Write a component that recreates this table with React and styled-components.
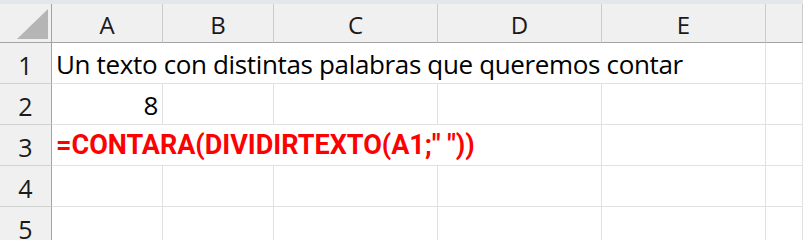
import React from 'react';
import styled, { createGlobalStyle } from 'styled-components';

const Global = createGlobalStyle`
  html, body { margin: 0; background: #fff; overflow: hidden; }
  body { font-family: "Open Sans", "Noto Sans", sans-serif; }
`;

const TopStrip = styled.div`
  height: 4px;
  background: #e3e7ec;
`;

const Grid = styled.div`
  display: grid;
  grid-template-columns: 52px 111px 111px 164px 164px 164px 1fr;
  grid-template-rows: 39px repeat(5, 41px);
`;

const Corner = styled.div`
  background: #f0f0f0;
  border-right: 1px solid #a3a3a3;
  border-bottom: 1px solid #a3a3a3;
  display: flex;
  align-items: flex-end;
  justify-content: flex-end;
  padding: 0 3px 3px 0;
`;

const Triangle = styled.div`
  width: 31px;
  height: 30px;
  background: #b5b5b5;
  clip-path: polygon(100% 0, 100% 100%, 0 100%);
`;

const ColHead = styled.div`
  background: #f0f0f0;
  border-right: 1px solid #cbcbcb;
  border-bottom: 1px solid #a3a3a3;
  display: flex;
  align-items: flex-end;
  justify-content: center;
  padding-bottom: 5px;
  font-size: 24px;
  line-height: 1;
  color: #1a1a1a;
`;

const RowHead = styled.div`
  background: #f0f0f0;
  border-right: 1px solid #a3a3a3;
  border-bottom: 1px solid #d2d2d2;
  display: flex;
  align-items: flex-end;
  justify-content: center;
  padding-bottom: 5px;
  font-size: 25px;
  line-height: 1;
  color: #1a1a1a;
`;

const Cell = styled.div`
  grid-column: span ${p => p.$span || 1};
  border-right: 1px solid #e1e1e1;
  border-bottom: 1px solid #e1e1e1;
  display: flex;
  align-items: flex-end;
  justify-content: ${p => (p.$right ? 'flex-end' : 'flex-start')};
  padding: 0 4px 6px 4px;
  font-size: 26px;
  letter-spacing: -0.35px;
  line-height: 1;
  white-space: nowrap;
  color: #000;
`;

const Formula = styled.span`
  color: #ff0000;
  font-family: Roboto, "Liberation Sans", sans-serif;
  font-weight: 700;
  font-size: 27px;
  letter-spacing: 0;
`;

const cols = ['A', 'B', 'C', 'D', 'E', ''];

const rows = [
  [{ span: 5, text: 'Un texto con distintas palabras que queremos contar' }, {}],
  [{ right: true, text: '8' }, {}, {}, {}, {}, {}],
  [{ span: 4, formula: '=CONTARA(DIVIDIRTEXTO(A1;" "))' }, {}, {}],
  [{}, {}, {}, {}, {}, {}],
  [{}, {}, {}, {}, {}, {}],
];

export default function App() {
  return (
    <>
      <Global />
      <TopStrip />
      <Grid>
        <Corner>
          <Triangle />
        </Corner>
        {cols.map((c, i) => (
          <ColHead key={i}>{c}</ColHead>
        ))}
        {rows.map((cells, r) => (
          <React.Fragment key={r}>
            <RowHead>{r + 1}</RowHead>
            {cells.map((cell, i) => (
              <Cell key={i} $span={cell.span} $right={cell.right}>
                {cell.formula ? <Formula>{cell.formula}</Formula> : cell.text}
              </Cell>
            ))}
          </React.Fragment>
        ))}
      </Grid>
    </>
  );
}
